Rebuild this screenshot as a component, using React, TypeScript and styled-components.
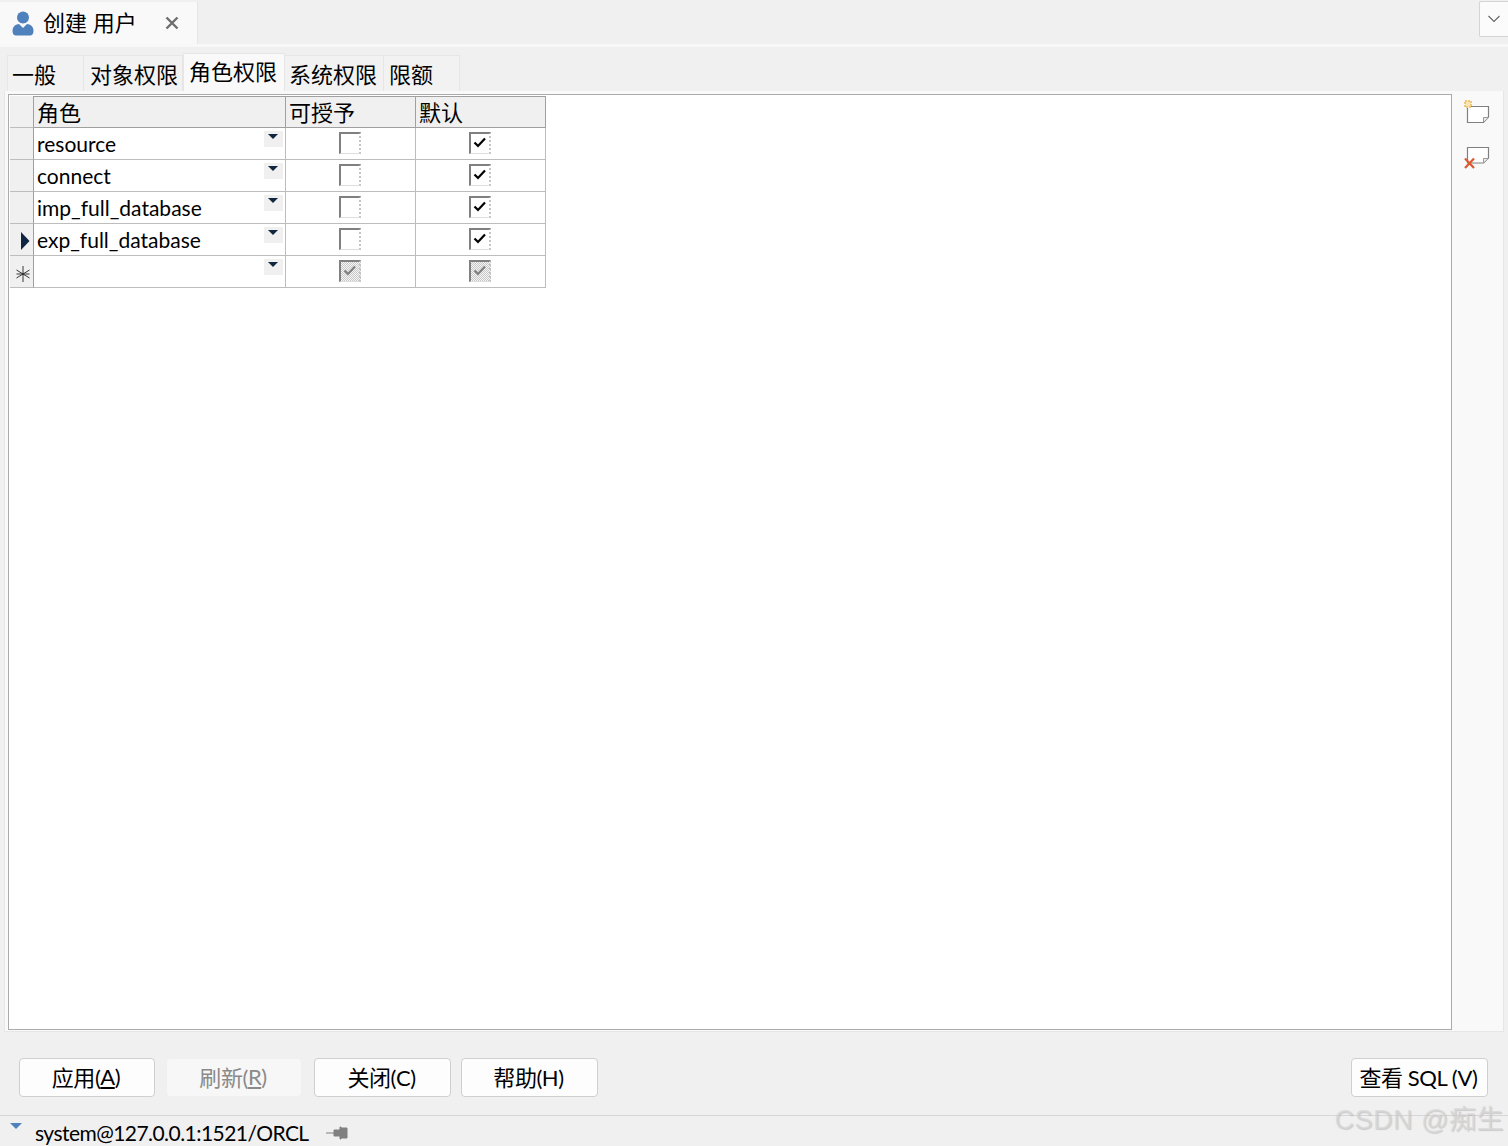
import React from "react";
import styled, { createGlobalStyle } from "styled-components";

const GlobalStyle = createGlobalStyle`
    html, body {
        margin: 0;
        padding: 0;
        background: #f0f0f0;
    }
    * {
        box-sizing: border-box;
    }
`;

const Window = styled.div`
    position: relative;
    width: 1508px;
    height: 1146px;
    overflow: hidden;
    display: flex;
    flex-direction: column;
    background: #f0f0f0;
    color: #000;
    font-family: "Lato", "Noto Sans CJK SC", sans-serif;
`;

const DocBar = styled.div`
    height: 47px;
    flex: none;
    display: flex;
    justify-content: space-between;
    padding-top: 2px;
    border-bottom: 3px solid #f8f8f8;
`;

const DocTab = styled.div`
    width: 198px;
    height: 42px;
    display: flex;
    align-items: center;
    padding: 0 0 0 12px;
    background: #f9f9f9;
    border-right: 1px solid #e6e6e6;
    font-size: 22px;
    span {
        margin: -4px 0 0 9px;
        width: 122px;
        white-space: nowrap;
    }
`;

const MenuButton = styled.div`
    width: 29px;
    height: 36px;
    margin-top: -1px;
    display: flex;
    align-items: center;
    justify-content: center;
    background: #fbfbfb;
    border: 1px solid #d4d4d4;
    border-right: none;
    border-radius: 2px 0 0 2px;
`;

const TabRow = styled.div`
    height: 44px;
    flex: none;
    display: flex;
    align-items: flex-end;
    padding-left: 7px;
`;

const Tab = styled.div<{ $width: number; $inset: number; $active?: boolean }>`
    width: ${(p) => p.$width}px;
    height: ${(p) => (p.$active ? 38 : 36)}px;
    padding: 0 0 ${(p) => (p.$active ? 5 : 2)}px ${(p) => p.$inset}px;
    display: flex;
    align-items: center;
    font-size: 22px;
    white-space: nowrap;
    background: ${(p) => (p.$active ? "#f9f9f9" : "#f2f2f2")};
    border: 1px solid #e6e6e6;
    border-bottom: none;
    border-left-width: ${(p) => (p.$active ? 1 : 0)}px;
    &:first-child {
        border-left-width: 1px;
    }
`;

const Panel = styled.div`
    width: 1500px;
    height: 941px;
    margin-left: 4px;
    flex: none;
    display: flex;
    padding: 3px 0 2px 3px;
    background: #f9f9f9;
    border: 1px solid #e6e6e6;
    border-top: none;
`;

const GridArea = styled.div`
    width: 1444px;
    height: 936px;
    padding: 1px;
    background: #fff;
    border: 1px solid #ababab;
`;

const RoleGrid = styled.div`
    display: grid;
    grid-template-columns: 24px 252px 130px 130px;
    grid-auto-rows: 32px;
    width: 536px;
`;

const HeaderCell = styled.div`
    display: flex;
    align-items: center;
    padding: 0 0 3px 3px;
    font-size: 22px;
    background: #f0f0f0;
    border-top: 1px solid #a0a0a0;
    border-right: 1px solid #a0a0a0;
    border-bottom: 1px solid #a0a0a0;
    white-space: nowrap;
`;

const RowHead = styled.div`
    display: flex;
    align-items: center;
    justify-content: center;
    background: #f0f0f0;
    border-right: 1px solid #a0a0a0;
    border-bottom: 1px solid #bdbdbd;
`;

const Cell = styled.div`
    position: relative;
    display: flex;
    align-items: center;
    padding: 0 0 0 3px;
    font-size: 21px;
    line-height: 30px;
    white-space: nowrap;
    border-right: 1px solid #bdbdbd;
    border-bottom: 1px solid #bdbdbd;
`;

const CheckCell = styled(Cell)`
    justify-content: center;
    padding: 0 2px 1px 0;
`;

const DropButton = styled.div`
    position: absolute;
    top: 3px;
    right: 2px;
    width: 19px;
    height: 16px;
    background: #f0f0f0;
    &::after {
        content: "";
        position: absolute;
        top: 3px;
        left: 4px;
        border-left: 5px solid transparent;
        border-right: 5px solid transparent;
        border-top: 5px solid #10253f;
    }
`;

const CheckBox = styled.div<{ $disabled?: boolean }>`
    width: 22px;
    height: 22px;
    padding-bottom: 2px;
    display: flex;
    align-items: center;
    justify-content: center;
    background: ${(p) =>
        p.$disabled ? "repeating-conic-gradient(#c8c8c8 0 25%, #f4f4f4 0 50%) 0 0 / 2px 2px" : "#fff"};
    border-top: 2px solid #808080;
    border-left: 2px solid #808080;
    border-right: 2px dotted #c4c4c4;
    border-bottom: 1px solid #dedede;
`;

const SideBar = styled.div`
    flex: 1;
    display: flex;
    flex-direction: column;
    align-items: center;
    gap: 22px;
    padding: 6px 1px 0 0;
`;

const ButtonBar = styled.div`
    height: 83px;
    flex: none;
    display: flex;
    align-items: flex-start;
    padding: 26px 20px 0 19px;
`;

const ActionButton = styled.div<{ $width: number; $gap?: number; $disabled?: boolean }>`
    width: ${(p) => p.$width}px;
    height: 39px;
    margin-right: ${(p) => p.$gap ?? 0}px;
    padding: 0 2px 3px 0;
    display: flex;
    align-items: center;
    justify-content: center;
    font-size: 22px;
    letter-spacing: -0.45px;
    white-space: nowrap;
    color: ${(p) => (p.$disabled ? "#8a8a8a" : "#000")};
    background: ${(p) => (p.$disabled ? "#f7f7f7" : "#fdfdfd")};
    border: 1px solid ${(p) => (p.$disabled ? "#efefef" : "#cfcfcf")};
    border-radius: 4px;
    u {
        text-underline-offset: 2px;
    }
`;

const Spacer = styled.div`
    flex: 1;
`;

const StatusBar = styled.div`
    flex: 1;
    min-height: 0;
    display: flex;
    align-items: center;
    padding: 4px 0 0 10px;
    border-top: 1px solid #d6d6d6;
    font-size: 21px;
    letter-spacing: -0.55px;
    line-height: 26px;
    white-space: nowrap;
`;

const StatusCaret = styled.div`
    width: 0;
    height: 0;
    margin: -14px 13px 0 0;
    border-left: 6px solid transparent;
    border-right: 6px solid transparent;
    border-top: 6px solid #4f81bd;
`;

const Watermark = styled.div`
    position: absolute;
    right: 4px;
    bottom: 10px;
    font-family: "Liberation Sans", "Noto Sans CJK SC", sans-serif;
    font-size: 27px;
    line-height: 32px;
    letter-spacing: 0.5px;
    white-space: nowrap;
    color: rgba(215, 215, 215, 0.7);
    text-shadow: 1px 1px 1px rgba(150, 150, 150, 0.4);
`;

const UserIcon = () => (
    <svg width="22" height="25" viewBox="0 0 22 25">
        <circle cx="11" cy="6.5" r="6" fill="#4f81bd" />
        <path d="M0.5 20 C0.5 15 4 13.5 7 13 L11 17 L15 13 C18 13.5 21.5 15 21.5 20 C21.5 23 20 24.5 18 24.5 L4 24.5 C2 24.5 0.5 23 0.5 20 Z" fill="#4f81bd" />
    </svg>
);

const CloseIcon = () => (
    <svg width="14" height="14" viewBox="0 0 14 14">
        <path d="M1.5 1.5 L12.5 12.5 M12.5 1.5 L1.5 12.5" stroke="#6e6e6e" strokeWidth="2.4" />
    </svg>
);

const ChevronIcon = () => (
    <svg width="12" height="8" viewBox="0 0 12 8">
        <path d="M0.5 1 L6 6.5 L11.5 1" fill="none" stroke="#666" strokeWidth="1.1" />
    </svg>
);

const CheckMark = ({ gray }: { gray?: boolean }) => (
    <svg width="14" height="12" viewBox="0 0 14 12">
        <path d="M1.5 5.5 L5 9 L12 1.5" fill="none" stroke={gray ? "#808080" : "#000"} strokeWidth="2.2" />
    </svg>
);

const CurrentRowIcon = () => (
    <svg width="10" height="18" viewBox="0 0 10 18" style={{ marginLeft: 6, marginTop: 2 }}>
        <path d="M1 0 L9.5 9 L1 18 Z" fill="#10253f" />
    </svg>
);

const NewRowIcon = () => (
    <svg width="14" height="16" viewBox="0 0 14 16" style={{ marginTop: 5, marginLeft: 2 }}>
        <path d="M7 0 V16 M0.5 4 L13.5 12 M13.5 4 L0.5 12 M0.5 8 H13.5" stroke="#222" strokeWidth="0.9" fill="none" />
    </svg>
);

const AddRowIcon = () => (
    <svg width="26" height="24" viewBox="0 0 26 24">
        <path d="M3.5 6.5 H24.5 V17 L19.5 22.5 H3.5 Z" fill="#fff" stroke="#808080" strokeWidth="1.2" />
        <path d="M24 17.5 H19.5 V22" fill="#eee" stroke="#999" />
        <rect x="1" y="1" width="6" height="6" fill="#fbe5b4" stroke="#f1c877" strokeWidth="2" strokeDasharray="2 1" />
    </svg>
);

const RemoveRowIcon = () => (
    <svg width="26" height="24" viewBox="0 0 26 24">
        <path d="M3.5 1.5 H24.5 V12 L19.5 17 H3.5 Z" fill="#fff" stroke="#808080" strokeWidth="1.2" />
        <path d="M24 12.5 H19.5 V16.5" fill="#eee" stroke="#999" />
        <path d="M1 12.5 L10 22 M10 12.5 L1 22" stroke="#dc5a32" strokeWidth="2.2" />
    </svg>
);

const PinIcon = () => (
    <svg width="22" height="14" viewBox="0 0 22 14" style={{ marginLeft: 17 }}>
        <path d="M0 7 H8 M8 4 H14 V1 L15 1 V13 L14 13 V10 H8 Z M15 2 H21 V12 H15 Z" fill="#808080" stroke="#808080" strokeWidth="1" />
    </svg>
);

const roles = [
    { name: "resource", grantable: false, isDefault: true },
    { name: "connect", grantable: false, isDefault: true },
    { name: "imp_full_database", grantable: false, isDefault: true },
    { name: "exp_full_database", grantable: false, isDefault: true, current: true },
];

const tabs = [
    { label: "一般", width: 77, inset: 4 },
    { label: "对象权限", width: 99, inset: 6 },
    { label: "角色权限", width: 102, inset: 5, active: true },
    { label: "系统权限", width: 99, inset: 4 },
    { label: "限额", width: 76, inset: 5 },
];

export default function App() {
    return (
        <Window>
            <GlobalStyle />
            <DocBar>
                <DocTab>
                    <UserIcon />
                    <span>创建 用户</span>
                    <CloseIcon />
                </DocTab>
                <MenuButton>
                    <ChevronIcon />
                </MenuButton>
            </DocBar>
            <TabRow>
                {tabs.map((t) => (
                    <Tab key={t.label} $width={t.width} $inset={t.inset} $active={t.active}>
                        {t.label}
                    </Tab>
                ))}
            </TabRow>
            <Panel>
                <GridArea>
                    <RoleGrid>
                        <RowHead />
                        <HeaderCell>角色</HeaderCell>
                        <HeaderCell>可授予</HeaderCell>
                        <HeaderCell>默认</HeaderCell>
                        {roles.map((r) => (
                            <React.Fragment key={r.name}>
                                <RowHead>{r.current && <CurrentRowIcon />}</RowHead>
                                <Cell>
                                    {r.name}
                                    <DropButton />
                                </Cell>
                                <CheckCell>
                                    <CheckBox>{r.grantable && <CheckMark />}</CheckBox>
                                </CheckCell>
                                <CheckCell>
                                    <CheckBox>{r.isDefault && <CheckMark />}</CheckBox>
                                </CheckCell>
                            </React.Fragment>
                        ))}
                        <RowHead>
                            <NewRowIcon />
                        </RowHead>
                        <Cell>
                            <DropButton />
                        </Cell>
                        <CheckCell>
                            <CheckBox $disabled>
                                <CheckMark gray />
                            </CheckBox>
                        </CheckCell>
                        <CheckCell>
                            <CheckBox $disabled>
                                <CheckMark gray />
                            </CheckBox>
                        </CheckCell>
                    </RoleGrid>
                </GridArea>
                <SideBar>
                    <AddRowIcon />
                    <RemoveRowIcon />
                </SideBar>
            </Panel>
            <ButtonBar>
                <ActionButton $width={136} $gap={11}>
                    应用(<u>A</u>)
                </ActionButton>
                <ActionButton $width={136} $gap={12} $disabled>
                    刷新(<u>R</u>)
                </ActionButton>
                <ActionButton $width={137} $gap={10}>
                    关闭(C)
                </ActionButton>
                <ActionButton $width={137}>帮助(H)</ActionButton>
                <Spacer />
                <ActionButton $width={137}>查看 SQL (V)</ActionButton>
            </ButtonBar>
            <StatusBar>
                <StatusCaret />
                system@127.0.0.1:1521/ORCL
                <PinIcon />
            </StatusBar>
            <Watermark>CSDN @痴生</Watermark>
        </Window>
    );
}
